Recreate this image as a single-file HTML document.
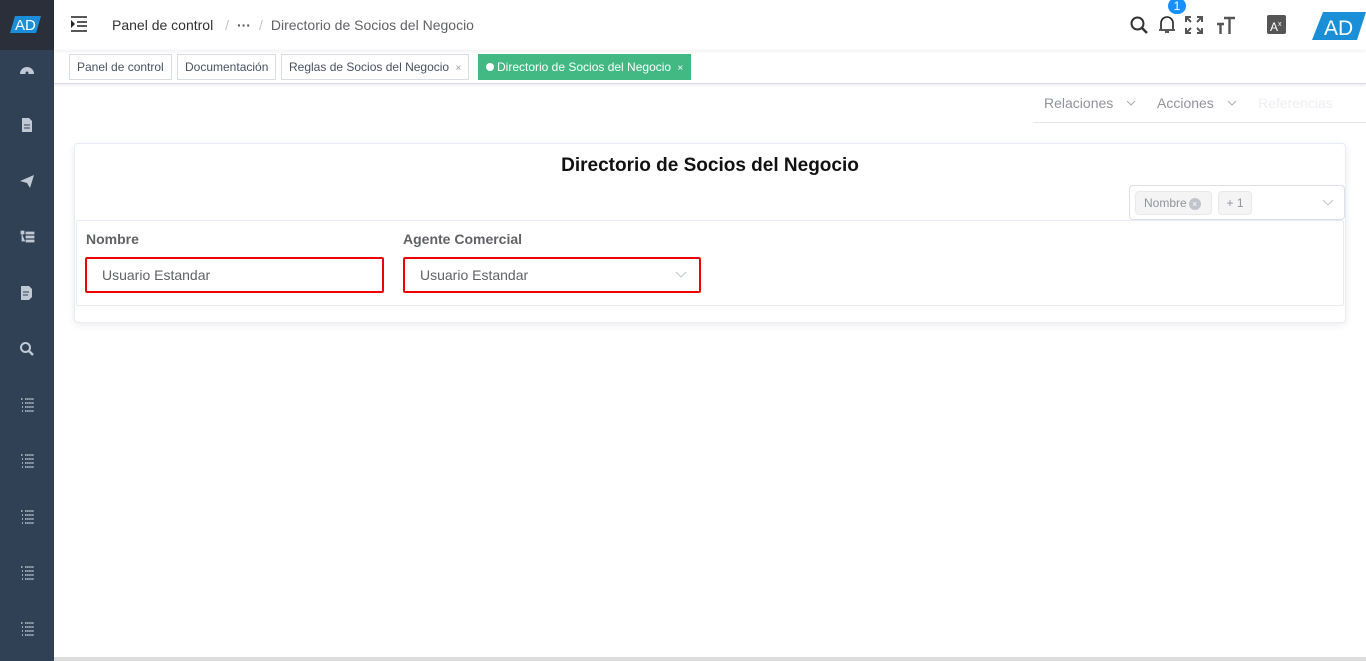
<!DOCTYPE html>
<html><head><meta charset="utf-8"><style>
*{box-sizing:border-box;margin:0;padding:0}
body{width:1366px;height:661px;overflow:hidden;font-family:"Liberation Sans",sans-serif;background:#fff;position:relative}
.side{position:absolute;left:0;top:0;width:54px;height:661px;background:#304156}
.logo{position:absolute;left:0;top:0;width:54px;height:50px;background:#2b2f3a}
.ic{position:absolute;left:19px;width:16px;height:16px}
.hdr{position:absolute;left:54px;top:0;right:0;height:50px;background:#fff;box-shadow:0 1px 4px rgba(0,21,41,.08)}
.tags{position:absolute;left:54px;top:50px;right:0;height:34px;border-bottom:1px solid #d8dce5;box-shadow:0 1px 3px rgba(0,0,0,.1)}
.tag{position:absolute;top:4px;height:26px;border:1px solid #d8dce5;font-size:12px;color:#495060;line-height:24px;padding:0 7px;background:#fff}
.card{position:absolute;left:74px;top:143px;width:1272px;height:180px;border:1px solid #e6ebf5;border-radius:4px;box-shadow:0 2px 8px rgba(0,0,0,.08)}
.lbl{position:absolute;font-size:14px;font-weight:bold;color:#606266}
.inp{position:absolute;top:257px;height:36px;border:2px solid #e00;border-radius:2px;font-size:14px;color:#606266;line-height:32px;padding-left:15px}
.chev{position:absolute}
</style></head><body>
<div class="side">
<div class="logo"><svg width="54" height="50"><polygon points="15,16 41,16 36,33 10,33" fill="#1a8fd8"/><text x="15" y="30" font-family="Liberation Sans" font-size="15" fill="#fff">AD</text></svg></div>
<svg class="ic" style="top:62px" viewBox="0 0 16 16"><path d="M1 12a7 7 0 0 1 14 0z" fill="#c0c8d4"/><circle cx="8" cy="11" r="1.5" fill="#304156"/></svg>
<svg class="ic" style="top:117px" viewBox="0 0 16 16"><path d="M3 1h7l3 3v11H3z" fill="#c0c8d4"/><path d="M5 8h6M5 11h6" stroke="#304156"/></svg>
<svg class="ic" style="top:173px" viewBox="0 0 16 16"><path d="M1 8l14-6-4 13-3-5z" fill="#c0c8d4"/></svg>
<svg class="ic" style="top:229px" viewBox="0 0 16 16"><path d="M2 2h3v3H2zM7 3h8v2H7zM7 7h8v2H7zM7 11h8v2H7zM3 5v7h3" fill="#c0c8d4" stroke="#c0c8d4" stroke-width=".8"/></svg>
<svg class="ic" style="top:285px" viewBox="0 0 16 16"><path d="M2 1h8l3 3v8l-3 3H2z" fill="#c0c8d4"/><path d="M4 7h6M4 10h5" stroke="#304156"/></svg>
<svg class="ic" style="top:341px" viewBox="0 0 16 16"><circle cx="6.5" cy="6.5" r="4.5" fill="none" stroke="#c0c8d4" stroke-width="2"/><path d="M10 10l4 4" stroke="#c0c8d4" stroke-width="2.4"/></svg>
<svg class="ic" style="top:397px" viewBox="0 0 16 16"><path d="M2 2h2M6 2h9M3 6h1M6 6h9M3 10h1M6 10h9M3 14h1M6 14h9" stroke="#c0c8d4" stroke-width="1.6" stroke-dasharray="1.5 .6"/></svg>
<svg class="ic" style="top:453px" viewBox="0 0 16 16"><path d="M2 2h2M6 2h9M3 6h1M6 6h9M3 10h1M6 10h9M3 14h1M6 14h9" stroke="#c0c8d4" stroke-width="1.6" stroke-dasharray="1.5 .6"/></svg>
<svg class="ic" style="top:509px" viewBox="0 0 16 16"><path d="M2 2h2M6 2h9M3 6h1M6 6h9M3 10h1M6 10h9M3 14h1M6 14h9" stroke="#c0c8d4" stroke-width="1.6" stroke-dasharray="1.5 .6"/></svg>
<svg class="ic" style="top:565px" viewBox="0 0 16 16"><path d="M2 2h2M6 2h9M3 6h1M6 6h9M3 10h1M6 10h9M3 14h1M6 14h9" stroke="#c0c8d4" stroke-width="1.6" stroke-dasharray="1.5 .6"/></svg>
<svg class="ic" style="top:621px" viewBox="0 0 16 16"><path d="M2 2h2M6 2h9M3 6h1M6 6h9M3 10h1M6 10h9M3 14h1M6 14h9" stroke="#c0c8d4" stroke-width="1.6" stroke-dasharray="1.5 .6"/></svg>
</div>
<div class="hdr">
<svg style="position:absolute;left:16px;top:16px" width="18" height="16"><path d="M1 1h16M7 6h10M7 10h10M1 15h16" stroke="#222" stroke-width="1.6"/><path d="M1 4l4 4-4 4z" fill="#222"/></svg>
<div style="position:absolute;left:58px;top:17px;font-size:14px;color:#303133">Panel de control <span style="color:#c0c4cc;margin:0 8px">/</span><b style="color:#555">···</b><span style="color:#c0c4cc;margin:0 8px">/</span><span style="color:#606266">Directorio de Socios del Negocio</span></div>
<svg style="position:absolute;left:1076px;top:16px" width="18" height="18"><circle cx="7.5" cy="7.5" r="6" fill="none" stroke="#333" stroke-width="2"/><path d="M12 12l5 5" stroke="#333" stroke-width="2.4"/></svg>
<svg style="position:absolute;left:1104px;top:14px" width="18" height="20"><path d="M3 15V9a6 6 0 0 1 12 0v6M1 16h16M7 18h4" stroke="#222" stroke-width="1.6" fill="none"/></svg>
<div style="position:absolute;left:1114px;top:-2px;width:18px;height:16px;border-radius:8px;background:#1890ff;color:#fff;font-size:12px;text-align:center;line-height:16px">1</div>
<svg style="position:absolute;left:1131px;top:16px" width="18" height="18"><path d="M1 6V1h5M12 1h5v5M17 12v5h-5M6 17H1v-5M2 2l4 4M16 2l-4 4M16 16l-4-4M2 16l4-4" stroke="#555" stroke-width="2" fill="none"/></svg>
<svg style="position:absolute;left:1162px;top:15px" width="20" height="20"><path d="M8 3h11M13.5 3v16M1 9h7M4.5 9v10" stroke="#555" stroke-width="2.4"/></svg>
<div style="position:absolute;left:1213px;top:15px;width:19px;height:19px;border-radius:2px;background:#555;color:#fff;font-size:12px;line-height:20px;padding-left:3px">A<sup style="font-size:7px">x</sup></div>
<svg style="position:absolute;left:1258px;top:11px" width="54" height="30"><polygon points="11,1 54,1 45,29 0,29" fill="#1a8fd8"/><text x="12" y="24" font-family="Liberation Sans" font-size="21" fill="#fff">AD</text></svg>
</div>
<div class="tags">
<div class="tag" style="left:15px">Panel de control</div>
<div class="tag" style="left:123px">Documentación</div>
<div class="tag" style="left:227px">Reglas de Socios del Negocio <span style="font-size:10px;color:#999;margin-left:3px">×</span></div>
<div class="tag" style="left:424px;background:#42b983;border-color:#42b983;color:#fff;padding-left:7px"><span style="display:inline-block;width:8px;height:8px;border-radius:4px;background:#fff;margin-right:3px"></span>Directorio de Socios del Negocio <span style="font-size:10px;margin-left:3px">×</span></div>
</div>
<div style="position:absolute;left:1033px;top:84px;width:333px;height:39px;border-bottom:1px solid #e6e6e6;font-size:14px;line-height:38px;color:#909399">
<span style="position:absolute;left:11px">Relaciones</span><svg class="chev" style="left:93px;top:16px" width="10" height="6"><path d="M1 1l4 4 4-4" stroke="#aaa" fill="none"/></svg>
<span style="position:absolute;left:124px">Acciones</span><svg class="chev" style="left:194px;top:16px" width="10" height="6"><path d="M1 1l4 4 4-4" stroke="#aaa" fill="none"/></svg>
<span style="position:absolute;left:225px;color:#eceef2">Referencias</span></div>
<div class="card">
<div style="position:absolute;left:0;right:0;top:11px;text-align:center;font-size:19px;font-weight:bold;color:#111">Directorio de Socios del Negocio</div>
<div style="position:absolute;left:1054px;top:41px;width:216px;height:35px;border:1px solid #dcdfe6;border-radius:4px">
<div style="position:absolute;left:5px;top:5px;height:24px;width:77px;background:#f4f4f5;border:1px solid #e9e9eb;border-radius:4px;font-size:12px;color:#909399;line-height:22px;padding-left:8px">Nombre<span style="display:inline-block;width:12px;height:12px;border-radius:6px;background:#c0c4cc;color:#fff;font-size:9px;text-align:center;line-height:12px;margin-left:2px">×</span></div>
<div style="position:absolute;left:88px;top:5px;height:24px;width:34px;background:#f4f4f5;border:1px solid #e9e9eb;border-radius:4px;font-size:12px;color:#909399;line-height:22px;text-align:center">+ 1</div>
<svg class="chev" style="right:10px;top:13px" width="12" height="7"><path d="M1 1l5 5 5-5" stroke="#c0c4cc" fill="none"/></svg></div>
</div>
<div style="position:absolute;left:76px;top:220px;width:1268px;height:86px;border:1px solid #e6ebf5;border-radius:2px"></div>
<div class="lbl" style="left:86px;top:231px">Nombre</div>
<div class="lbl" style="left:403px;top:231px">Agente Comercial</div>
<div class="inp" style="left:85px;width:299px">Usuario Estandar</div>
<div class="inp" style="left:403px;width:298px">Usuario Estandar<svg class="chev" style="right:12px;top:12px" width="12" height="7"><path d="M1 1l5 5 5-5" stroke="#c0c4cc" fill="none"/></svg></div>
<div style="position:absolute;left:54px;top:657px;width:1312px;height:4px;background:#ddd"></div>
</body></html>
